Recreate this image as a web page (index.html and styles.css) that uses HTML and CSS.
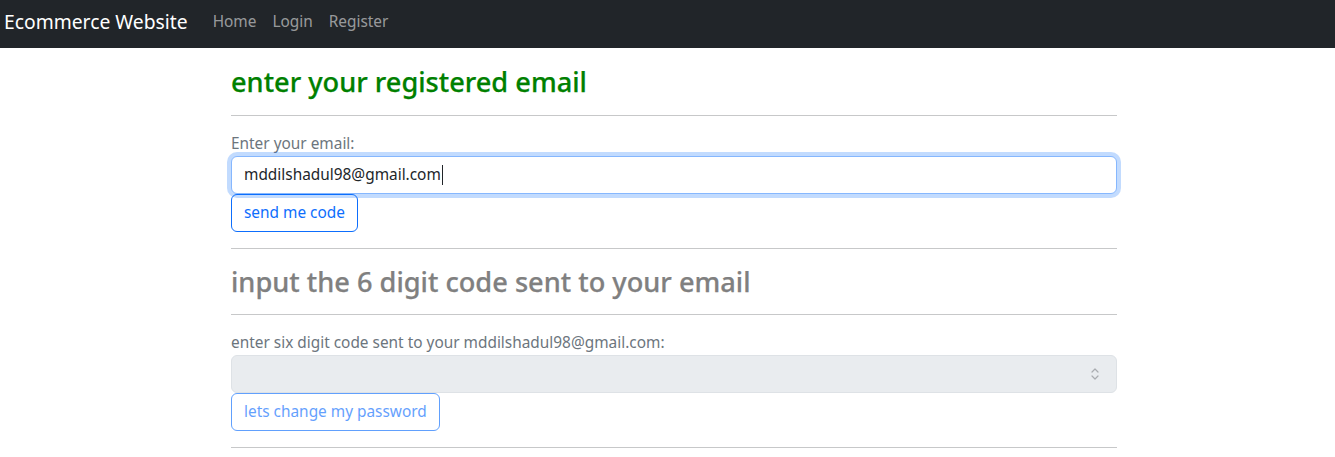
FILE: index.html
```html
<!DOCTYPE html>
<html lang="en">
<head>
<meta charset="utf-8">
<title>Ecommerce Website</title>
<link rel="stylesheet" href="styles.css">
</head>
<body>
<nav class="navbar">
  <a class="brand" href="#">Ecommerce Website</a>
  <ul class="nav">
    <li><a class="nav-link" href="#">Home</a></li>
    <li><a class="nav-link" href="#">Login</a></li>
    <li><a class="nav-link" href="#">Register</a></li>
  </ul>
</nav>
<main class="page">
  <section class="step">
    <h3 class="title title-active">enter your registered email</h3>
    <hr class="rule">
    <label class="label" for="email">Enter your email:</label>
    <div class="field-wrap">
      <input class="field field-focus" id="email" type="text" value="mddilshadul98@gmail.com">
      <span class="caret" aria-hidden="true"></span>
    </div>
    <button class="btn" type="button">send me code</button>
    <hr class="rule">
  </section>
  <section class="step">
    <h3 class="title title-muted">input the 6 digit code sent to your email</h3>
    <hr class="rule">
    <label class="label" for="code">enter six digit code sent to your mddilshadul98@gmail.com:</label>
    <div class="field-wrap">
      <input class="field" id="code" type="text" disabled>
      <svg class="spin" width="10" height="16" viewBox="0 0 10 16" aria-hidden="true"><path d="M2 6 L5 3 L8 6" fill="none" stroke="#a9acb0" stroke-width="1.2" stroke-linecap="round" stroke-linejoin="round"/><path d="M2 10 L5 13 L8 10" fill="none" stroke="#a9acb0" stroke-width="1.2" stroke-linecap="round" stroke-linejoin="round"/></svg>
    </div>
    <button class="btn" type="button" disabled>lets change my password</button>
    <hr class="rule">
  </section>
</main>
</body>
</html>
```

FILE: styles.css
```css
* { box-sizing: border-box; }
html, body {
  margin: 0;
  padding: 0;
  background: #fff;
  color: #212529;
  font-family: "Noto Sans", "Open Sans", sans-serif;
  font-size: 15.4px;
  line-height: 24px;
}
.navbar {
  height: 48px;
  background: #212529;
  display: flex;
  align-items: center;
  padding: 0 4px 5px;
}
.brand {
  color: #fff;
  font-size: 19.3px;
  text-decoration: none;
  margin-right: 17px;
  line-height: 30px;
}
.nav {
  list-style: none;
  display: flex;
  margin: 0;
  padding: 0;
}
.nav-link {
  display: block;
  color: rgba(255,255,255,0.55);
  text-decoration: none;
  padding: 8px 8px;
}
.page {
  width: 886px;
  margin-left: 231px;
  padding-top: 17px;
  display: flex;
  flex-direction: column;
}
.step {
  display: flex;
  flex-direction: column;
  align-items: flex-start;
}
.title {
  margin: 0;
  font-size: 27.2px;
  font-weight: 500;
  line-height: 33.6px;
  -webkit-text-stroke: 0.25px currentColor;
}
.title-active { color: #008000; }
.title-muted { color: #808080; }
.rule {
  align-self: stretch;
  margin: 16px 0;
  border: 0;
  border-top: 1px solid #212529;
  opacity: 0.25;
}
.step .rule:last-child { margin-bottom: 0; }
.step + .step { margin-top: 16px; }
.label {
  color: #6c757d;
  display: block;
}
.field-wrap {
  position: relative;
  align-self: stretch;
}
.field {
  display: block;
  width: 100%;
  height: 38px;
  padding: 6px 12px;
  font: inherit;
  color: #212529;
  background: #fff;
  border: 1px solid #dee2e6;
  border-radius: 6px;
  outline: none;
}
.field-focus {
  border-color: #86b7fe;
  box-shadow: 0 0 0 4px rgba(13,110,253,0.25);
}
.field:disabled {
  background: #e9ecef;
}
.caret {
  position: absolute;
  left: 211px;
  top: 9px;
  width: 1px;
  height: 20px;
  background: #212529;
}
.spin {
  position: absolute;
  right: 17px;
  top: 11px;
}
.btn {
  height: 38px;
  padding: 6px 12px;
  font: inherit;
  color: #0d6efd;
  background: transparent;
  border: 1px solid #0d6efd;
  border-radius: 6px;
  cursor: pointer;
}
.btn:disabled {
  opacity: 0.65;
  cursor: default;
}
```
